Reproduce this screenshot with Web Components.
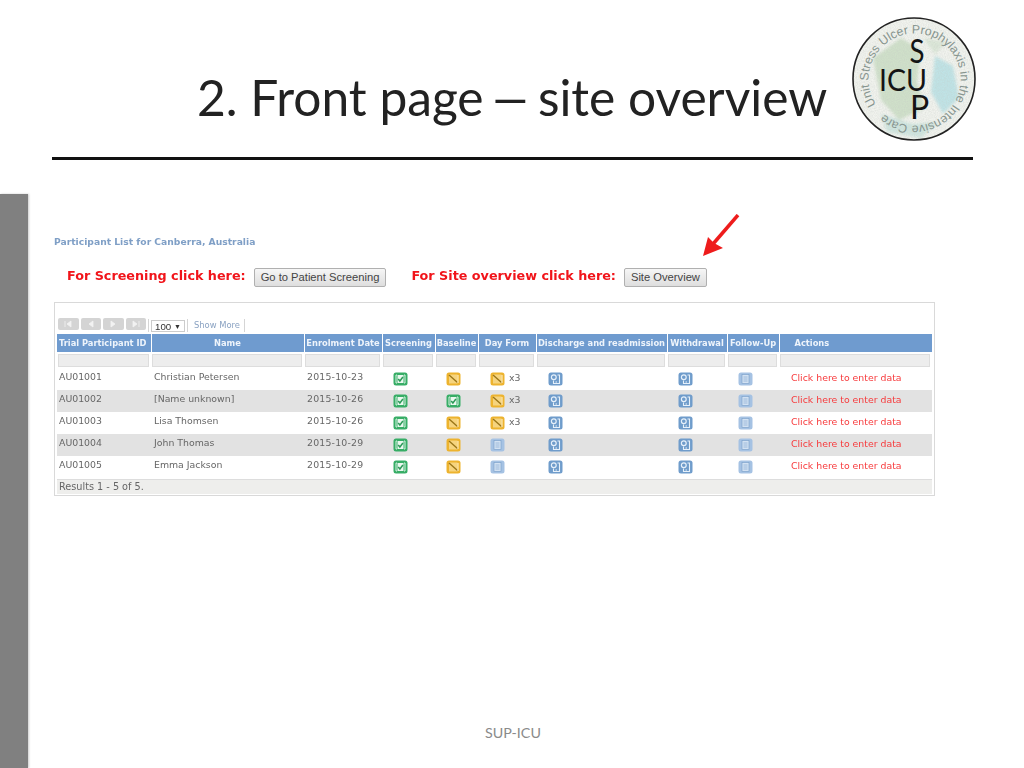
<!DOCTYPE html>
<html>
<head>
<meta charset="utf-8">
<title>Front page</title>
<style>
  html, body { margin: 0; padding: 0; background: #fff; }
</style>
</head>
<body>
<sup-slide>
  <sup-logo slot="logo"></sup-logo>
  <span slot="title">2. Front page <span style="display:inline-block;transform:scaleX(1.5)">–</span> site overview</span>
  <site-overview></site-overview>
  <span slot="footer">SUP-ICU</span>
</sup-slide>

<script>
(function () {
    // slide frame: title row, black rule, grey side bar, content, footer
    class SupSlide extends HTMLElement {
        constructor() {
            super();
            this.attachShadow({ mode: "open" }).innerHTML = `
              <style>
                :host { display: flex; flex-direction: column; width: 1024px; height: 768px; overflow: hidden; font-family: Lato, "Open Sans", sans-serif; background: #fff; }
                header { display: flex; align-items: center; height: 157px; padding: 0 47px 0 197px; box-sizing: border-box; }
                h1 { flex: 1; margin: 0; padding-top: 37px; font-size: 49.7px; font-weight: 400; color: #222; line-height: 48px; white-space: nowrap; }
                .rule { height: 3px; margin: 0 51px 0 52px; background: #111; flex: none; }
                .body { flex: 1; display: grid; grid-template-columns: 28px 1fr; margin-top: 34px; min-height: 0; }
                .bar { background: #808080; box-shadow: 1px 0 2px #ccc; }
                .main { display: flex; flex-direction: column; }
                .content { flex: 1; }
                footer { padding-bottom: 26px; padding-right: 26px; text-align: center; font-size: 14.3px; line-height: 18px; color: #8a8a8a; }
              </style>
              <header><h1><slot name="title"></slot></h1><slot name="logo"></slot></header>
              <div class="rule"></div>
              <div class="body">
                <div class="bar"></div>
                <div class="main">
                  <div class="content"><slot></slot></div>
                  <footer><slot name="footer"></slot></footer>
                </div>
              </div>`;
        }
    }

    class SupLogo extends HTMLElement {
        constructor() {
            super();
            this.attachShadow({ mode: "open" }).innerHTML = `
              <style>
                :host { display: block; width: 126px; height: 126px; flex: none; }
                svg { display: block; }
                .ring { font: 400 12.3px "Liberation Sans", sans-serif; fill: #87958f; }
                .big { font-family: Lato, sans-serif; font-weight: 400; fill: #141414; }
              </style>
              <svg width="126" height="126" viewBox="0 0 126 126">
                <defs>
                  <path id="ring" d="M25 88.6A46 46 0 1 1 30.5 95.5"/>
                  <filter id="soft"><feGaussianBlur stdDeviation="1.6"/></filter>
                  <filter id="grain"><feTurbulence type="fractalNoise" baseFrequency=".9" numOctaves="2" seed="4"/><feColorMatrix values="0 0 0 0 .55  0 0 0 0 .58  0 0 0 0 .55  1.4 0 0 0 -.45"/></filter>
                  <clipPath id="disc"><circle cx="63" cy="63" r="61"/></clipPath>
                </defs>
                <circle cx="63" cy="63" r="61" fill="#f1f3ee"/>
                <g clip-path="url(#disc)">
                  <g filter="url(#soft)">
                    <path d="M22 42 L50 22 L70 34 L66 66 L74 92 L48 104 L30 84 Z" fill="#cfe0c9"/>
                    <path d="M84 40 L102 50 L108 82 L92 98 L80 76 Z" fill="#bfe3e6"/>
                    <path d="M72 22 L96 26 L84 38 Z" fill="#dbe7d8"/>
                    <path d="M30 98 L62 108 L88 106 L70 122 L36 116 Z" fill="#cfe5df"/>
                  </g>
                  <rect width="126" height="126" filter="url(#grain)" opacity=".45"/>
                </g>
                <circle cx="63" cy="63" r="61" fill="none" stroke="#222" stroke-width="1.6"/>
                <text class="ring"><textPath href="#ring">Unit Stress Ulcer Prophylaxis in the Intensive Care</textPath></text>
                <text class="big" x="66" y="47" font-size="33" text-anchor="middle" textLength="15" lengthAdjust="spacingAndGlyphs">S</text>
                <text class="big" x="28" y="75" font-size="31" textLength="48" lengthAdjust="spacingAndGlyphs">ICU</text>
                <text class="big" x="59" y="103" font-size="32">P</text>
              </svg>`;
        }
    }

    // small status icons of the table
    const ICONS = {
        done: `<rect x=".5" y=".5" width="14" height="13" rx="2.5" fill="#37ad66"/><path d="M4 3H3v8h1M11 3h1v8h-1" fill="none" stroke="#d8f2e2" stroke-width="1"/><rect x="4.5" y="3" width="6" height="8" fill="#eaf8ef"/><path d="M5.2 7l1.7 2 3-4" fill="none" stroke="#2c9a58" stroke-width="1.5"/>`,
        edit: `<rect x=".5" y=".5" width="14" height="13" rx="2.5" fill="#edb32e"/><rect x="3" y="2.5" width="8.5" height="9" fill="#f6d47e"/><path d="M3 3l8.5 7.5" stroke="#9a7518" stroke-width="1.4"/><path d="M12 3v8" stroke="#fff3d0" stroke-width="1"/>`,
        note: `<rect x=".5" y=".5" width="14" height="13" rx="2.5" fill="#6f9ccb"/><circle cx="5.8" cy="5.2" r="2.4" fill="none" stroke="#e6f0fa" stroke-width="1.2"/><path d="M9.5 3h2v8.5h-6v-3" fill="none" stroke="#e6f0fa" stroke-width="1.1"/><path d="M7.5 10H9" stroke="#e6f0fa"/>`,
        page: `<rect x=".5" y=".5" width="14" height="13" rx="2.5" fill="#a5c2e3"/><rect x="4" y="2.5" width="7" height="9" fill="#d2e1f2" stroke="#7fa3cc" stroke-width=".7"/><path d="M5.5 5h4M5.5 7h4M5.5 9h4" stroke="#8fb0d6" stroke-width=".8"/>`
    };

    class StatusIcon extends HTMLElement {
        constructor() {
            super();
            this.attachShadow({ mode: "open" });
        }
        connectedCallback() {
            let kind = this.getAttribute("kind");
            this.shadowRoot.innerHTML = `
              <style>
                :host { display: inline-block; width: 15px; height: 14px; vertical-align: middle; }
                svg { display: block; }
              </style>
              <svg width="15" height="14" viewBox="0 0 15 14">${ICONS[kind]}</svg>`;
        }
    }

    class GreyButton extends HTMLElement {
        constructor() {
            super();
            this.attachShadow({ mode: "open" }).innerHTML = `
              <style>
                :host { display: inline-block; height: 19px; padding: 0 6px; box-sizing: border-box; border: 1px solid #b0b0b0; border-radius: 2px;
                        background: linear-gradient(#f6f6f6, #dedede); font: 11.2px/17px "Liberation Sans", sans-serif; color: #444; white-space: nowrap; }
              </style>
              <slot></slot>`;
        }
    }

    const HEADS = ["Trial Participant ID", "Name", "Enrolment Date", "Screening", "Baseline", "Day Form", "Discharge and readmission", "Withdrawal", "Follow-Up", "Actions"];
    const WIDTHS = [94, 153, 78, 53, 43, 58, 131, 60, 52, 153];
    const ROWS = [
        ["AU01001", "Christian Petersen", "2015-10-23", "done", "edit", "edit", true],
        ["AU01002", "[Name unknown]", "2015-10-26", "done", "done", "edit", true],
        ["AU01003", "Lisa Thomsen", "2015-10-26", "done", "edit", "edit", true],
        ["AU01004", "John Thomas", "2015-10-29", "done", "edit", "page", false],
        ["AU01005", "Emma Jackson", "2015-10-29", "done", "edit", "page", false]
    ];

    class ParticipantTable extends HTMLElement {
        constructor() {
            super();
            let cols = WIDTHS.map(w => `<col style="width:${w}px">`).join("");
            let heads = HEADS.map((h, i) => `<th class="${i == 0 ? "left" : ""}${i == 9 ? " act" : ""}">${h}</th>`).join("");
            let filters = HEADS.map(() => `<td><div class="f"></div></td>`).join("");
            let rows = ROWS.map(r => `
              <tr class="row">
                <td class="t">${r[0]}</td>
                <td class="t">${r[1]}</td>
                <td class="t dt">${r[2]}</td>
                <td class="c"><status-icon kind="${r[3]}"></status-icon></td>
                <td class="c"><status-icon kind="${r[4]}"></status-icon></td>
                <td class="d"><status-icon kind="${r[5]}"></status-icon>${r[6] ? `<span>x3</span>` : ""}</td>
                <td class="d"><status-icon kind="note"></status-icon></td>
                <td class="c"><status-icon kind="note"></status-icon></td>
                <td class="c"><status-icon kind="page"></status-icon></td>
                <td class="a">Click here to enter data</td>
              </tr>`).join("");
            this.attachShadow({ mode: "open" }).innerHTML = `
              <style>
                :host { display: block; width: 881px; height: 194px; box-sizing: border-box; border: 1px solid #d9d9d9; padding: 15px 2px 0 2px; font: 9.35px "DejaVu Sans", sans-serif; color: #666; filter: blur(.3px); }
                .tools { display: flex; align-items: flex-start; height: 16px; padding-left: 1px; gap: 2px; }
                .pg { width: 20.5px; height: 12px; border-radius: 2px; background: #d4d4d4; display: flex; align-items: center; justify-content: center; }
                .pg svg { display: block; }
                .sel { display: flex; align-items: center; justify-content: space-between; width: 34px; height: 12px; margin-top: 2px; padding: 0 3px; box-sizing: border-box; border: 1px solid #ccc; font: 9.7px "Liberation Sans", sans-serif; color: #333; }
                .sep { width: 1px; height: 13px; background: #d5d5d5; margin-top: 1px; }
                .more { color: #8aa2c2; font-size: 8.4px; line-height: 15px; padding: 0 2px 0 4px; }
                table { border-collapse: collapse; table-layout: fixed; width: 875px; }
                td, th { box-sizing: border-box; }
                th { height: 18px; padding: 0; background: #6f9bcf; color: #eef4fb; font-size: 8.3px; font-weight: 700; text-align: center; white-space: nowrap; overflow: hidden; border-right: 1px solid #fff; }
                th.left { text-align: left; padding-left: 2px; }
                th.act { border-right: 0; text-align: left; padding-left: 15px; }
                .filters td { height: 16px; padding: 1px 2px 1px 1px; }
                .f { height: 13px; background: #ededed; border: 1px solid #ddd; box-sizing: border-box; }
                .row td { height: 22px; padding: 0 0 1px; white-space: nowrap; }
                .row:nth-child(even) td { background: #e2e2e2; }
                td.t { padding: 0 0 5px 2px !important; }
                .row td:nth-child(2), .row td:nth-child(3) { padding-left: 3px !important; }
                td.dt { letter-spacing: .2px; }
                td.c { padding-left: 11px !important; }
                td.d { padding-left: 12px !important; }
                td.d span { margin-left: 4px; }
                td.a { padding: 0 0 3px 12px !important; color: #f73a3c; }
                .foot { height: 15px; margin-top: 1px; padding-left: 2px; box-sizing: border-box; background: #eeeeec; border-top: 1px solid #ddd; font-size: 9.7px; line-height: 14px; }
              </style>
              <div class="tools">
                <div class="pg">${this.pgIcon("M3 1v6M9 1L5 4l4 3z")}</div>
                <div class="pg">${this.pgIcon("M8 1L4 4l4 3z")}</div>
                <div class="pg">${this.pgIcon("M4 1l4 3-4 3z")}</div>
                <div class="pg">${this.pgIcon("M3 1l4 3-4 3zM9 1v6")}</div>
                <div class="sep"></div>
                <div class="sel"><span>100</span><span style="font-size:7px">▼</span></div>
                <div class="sep"></div>
                <span class="more">Show More</span>
                <div class="sep"></div>
              </div>
              <table>
                <colgroup>${cols}</colgroup>
                <thead><tr>${heads}</tr></thead>
                <tbody class="filters"><tr>${filters}</tr></tbody>
                <tbody>${rows}</tbody>
              </table>
              <div class="foot">Results 1 - 5 of 5.</div>`;
        }
        pgIcon(d) {
            return `<svg width="12" height="8" viewBox="0 0 12 8"><path d="${d}" fill="#f2f2f2" stroke="#f2f2f2" stroke-width=".8"/></svg>`;
        }
    }

    class SiteOverview extends HTMLElement {
        constructor() {
            super();
            this.attachShadow({ mode: "open" }).innerHTML = `
              <style>
                :host { display: block; position: relative; padding: 42px 0 0 26px; }
                h2 { margin: 0; font: 700 9.2px/12px "DejaVu Sans", sans-serif; color: #7f9fc6; filter: blur(.25px); }
                .links { display: flex; align-items: center; height: 20px; margin: 19px 0 15px 13px; }
                b { font: 700 12.75px/20px "DejaVu Sans", sans-serif; color: #f1141a; white-space: nowrap; position: relative; top: -1px; filter: blur(.2px); }
                grey-button { margin-left: 8px; }
                .second { margin-left: 25px; }
                svg { position: absolute; left: 672px; top: 20px; }
              </style>
              <h2>Participant List for Canberra, Australia</h2>
              <div class="links">
                <b>For Screening click here:</b><grey-button>Go to Patient Screening</grey-button>
                <b class="second">For Site overview click here:</b><grey-button>Site Overview</grey-button>
              </div>
              <participant-table></participant-table>
              <svg width="42" height="46" viewBox="0 0 42 46">
                <path d="M38 1L13 30" stroke="#ee1c1c" stroke-width="3.5" fill="none"/>
                <path d="M3 42L8 23L14 29L23 34Z" fill="#ee1c1c"/>
              </svg>`;
        }
    }

    customElements.define("sup-slide", SupSlide);
    customElements.define("sup-logo", SupLogo);
    customElements.define("status-icon", StatusIcon);
    customElements.define("grey-button", GreyButton);
    customElements.define("participant-table", ParticipantTable);
    customElements.define("site-overview", SiteOverview);
})();
</script>
</body>
</html>
